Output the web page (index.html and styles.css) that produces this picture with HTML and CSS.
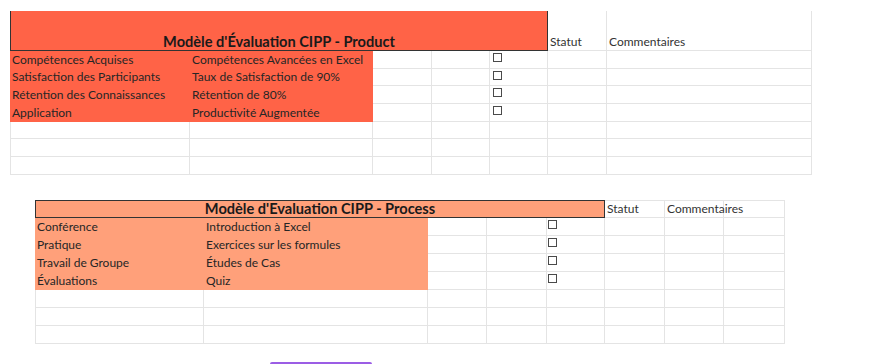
FILE: index.html
```html
<!DOCTYPE html>
<html lang="fr">
<head>
<meta charset="utf-8">
<title>Modèle d'Évaluation CIPP</title>
<link rel="stylesheet" href="styles.css">
</head>
<body>
<div class="sheet product">
  <div class="title">Modèle d'Évaluation CIPP - Product</div>
  <div class="cell head">Statut</div>
  <div class="cell head">Commentaires</div>

  <div class="cell first fill">Compétences Acquises</div>
  <div class="cell fill">Compétences Avancées en Excel</div>
  <div class="cell"></div><div class="cell"></div>
  <div class="cell chk"><span class="box"></span></div>
  <div class="cell"></div><div class="cell"></div>

  <div class="cell first fill">Satisfaction des Participants</div>
  <div class="cell fill">Taux de Satisfaction de 90%</div>
  <div class="cell"></div><div class="cell"></div>
  <div class="cell chk"><span class="box"></span></div>
  <div class="cell"></div><div class="cell"></div>

  <div class="cell first fill">Rétention des Connaissances</div>
  <div class="cell fill">Rétention de 80%</div>
  <div class="cell"></div><div class="cell"></div>
  <div class="cell chk"><span class="box"></span></div>
  <div class="cell"></div><div class="cell"></div>

  <div class="cell first fill">Application</div>
  <div class="cell fill">Productivité Augmentée</div>
  <div class="cell"></div><div class="cell"></div>
  <div class="cell chk"><span class="box"></span></div>
  <div class="cell"></div><div class="cell"></div>

  <div class="cell first"></div><div class="cell"></div><div class="cell"></div><div class="cell"></div><div class="cell"></div><div class="cell"></div><div class="cell"></div>
  <div class="cell first"></div><div class="cell"></div><div class="cell"></div><div class="cell"></div><div class="cell"></div><div class="cell"></div><div class="cell"></div>
  <div class="cell first"></div><div class="cell"></div><div class="cell"></div><div class="cell"></div><div class="cell"></div><div class="cell"></div><div class="cell"></div>
</div>

<div class="sheet process">
  <div class="title">Modèle d'Evaluation CIPP - Process</div>
  <div class="cell head">Statut</div>
  <div class="cell head">Commentaires</div>
  <div class="cell head"></div>

  <div class="cell first fill">Conférence</div>
  <div class="cell fill">Introduction à Excel</div>
  <div class="cell"></div><div class="cell"></div>
  <div class="cell chk"><span class="box"></span></div>
  <div class="cell"></div><div class="cell"></div><div class="cell"></div>

  <div class="cell first fill">Pratique</div>
  <div class="cell fill">Exercices sur les formules</div>
  <div class="cell"></div><div class="cell"></div>
  <div class="cell chk"><span class="box"></span></div>
  <div class="cell"></div><div class="cell"></div><div class="cell"></div>

  <div class="cell first fill">Travail de Groupe</div>
  <div class="cell fill">Études de Cas</div>
  <div class="cell"></div><div class="cell"></div>
  <div class="cell chk"><span class="box"></span></div>
  <div class="cell"></div><div class="cell"></div><div class="cell"></div>

  <div class="cell first fill">Évaluations</div>
  <div class="cell fill">Quiz</div>
  <div class="cell"></div><div class="cell"></div>
  <div class="cell chk"><span class="box"></span></div>
  <div class="cell"></div><div class="cell"></div><div class="cell"></div>

  <div class="cell first"></div><div class="cell"></div><div class="cell"></div><div class="cell"></div><div class="cell"></div><div class="cell"></div><div class="cell"></div><div class="cell"></div>
  <div class="cell first"></div><div class="cell"></div><div class="cell"></div><div class="cell"></div><div class="cell"></div><div class="cell"></div><div class="cell"></div><div class="cell"></div>
  <div class="cell first"></div><div class="cell"></div><div class="cell"></div><div class="cell"></div><div class="cell"></div><div class="cell"></div><div class="cell"></div><div class="cell"></div>
</div>

<div class="action"><div class="btn"></div></div>
</body>
</html>
```

FILE: styles.css
```css
html, body {
  margin: 0;
  padding: 0;
  background: #ffffff;
  overflow: hidden;
}
body {
  font-family: Lato, "Open Sans", "Liberation Sans", sans-serif;
  font-size: 12px;
  color: #262626;
}
.sheet {
  display: grid;
}
.product {
  margin: 11px 0 0 10px;
  grid-template-columns: 180px 183px 59px 58px 58px 59px 205px;
  grid-template-rows: 40px repeat(7, 17.7px);
  width: 802px;
}
.process {
  margin: 25px 0 0 35px;
  grid-template-columns: 169px 224px 59px 60px 58px 60px 59px 61px;
  grid-template-rows: repeat(8, 18px);
  width: 750px;
}
.cell {
  box-sizing: border-box;
  border-right: 1px solid #e4e4e4;
  border-bottom: 1px solid #e4e4e4;
  padding: 0 2px;
  white-space: nowrap;
  display: flex;
  align-items: flex-end;
  line-height: 16px;
  min-width: 0;
}
.cell.first {
  border-left: 1px solid #e4e4e4;
  padding-left: 1px;
}
.product .fill {
  background: #ff6347;
  border-color: transparent;
}
.process .fill {
  background: #ffa07a;
  border-color: transparent;
}
.title {
  box-sizing: border-box;
  grid-column: 1 / 6;
  display: flex;
  justify-content: center;
  align-items: flex-end;
  font-weight: 700;
  font-size: 14.6px;
  line-height: 17px;
  color: #1a1a1a;
  white-space: nowrap;
}
.product .title {
  background: #ff6347;
  border-left: 1px solid #333;
  border-right: 1px solid #333;
  border-bottom: 1px solid #333;
}
.process .title {
  background: #ffa07a;
  border: 1px solid #333;
  line-height: 16px;
}
.process .head {
  border-top: 1px solid #e4e4e4;
}
.head {
  color: #333;
}
.chk {
  align-items: flex-start;
  padding: 2px 0 0 3px;
}
.process .chk {
  padding: 2px 0 0 1px;
}
.box {
  display: block;
  width: 9px;
  height: 9px;
  box-sizing: border-box;
  border: 1px solid #4a4a4a;
  background: #fff;
}
.action {
  margin: 18px 0 0 270px;
}
.btn {
  width: 102px;
  height: 2px;
  border-radius: 2px 2px 0 0;
  background: #9b5de5;
}
```
